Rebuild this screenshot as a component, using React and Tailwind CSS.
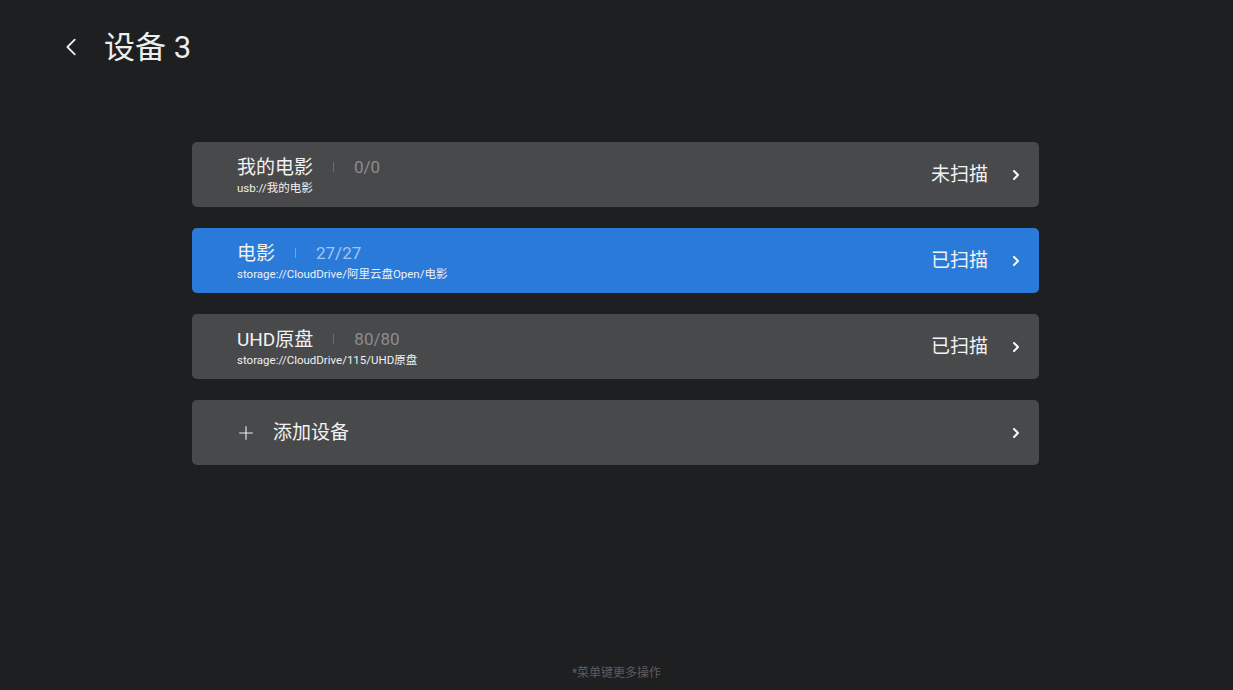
import React from 'react';

const font = { fontFamily: 'Roboto, "Noto Sans CJK SC", sans-serif' };

const devices = [
    { name: '我的电影', count: '0/0', path: 'usb://我的电影', status: '未扫描', active: false },
    { name: '电影', count: '27/27', path: 'storage://CloudDrive/阿里云盘Open/电影', status: '已扫描', active: true },
    { name: 'UHD原盘', count: '80/80', path: 'storage://CloudDrive/115/UHD原盘', status: '已扫描', active: false },
];

const Chevron = ({ className }) => (
    <svg viewBox="0 0 24 24" className={className} fill="none" stroke="currentColor" strokeWidth="3" strokeLinecap="round" strokeLinejoin="round">
        <path d="M9 6l6 6-6 6" />
    </svg>
);

const DeviceRow = ({ device }) => (
    <div
        className={`flex items-center h-[65px] rounded-[5px] pl-[45px] pr-[15px] ${device.active ? 'bg-[#2a7ad9]' : 'bg-[#48494b]'}`}
    >
        <div className="flex-1 flex flex-col">
            <div className="flex items-center h-[26px]">
                <span className="text-[19px] text-[#f2f2f2] leading-none">{device.name}</span>
                <span className={`ml-[20px] mr-[20px] w-px h-[10px] ${device.active ? 'bg-[#6fa3e6]' : 'bg-[#6a6b6d]'}`} />
                <span className={`text-[17px] leading-none ${device.active ? 'text-[#a3c5f0]' : 'text-[#8c8d8f]'}`}>{device.count}</span>
            </div>
            <div className="text-[11.5px] text-[#f0f0f0] leading-none mt-[3px]">{device.path}</div>
        </div>
        <span className="text-[19px] text-[#f2f2f2] leading-none">{device.status}</span>
        <Chevron className="w-[16px] h-[16px] text-white ml-[20px]" />
    </div>
);

export default function App() {
    return (
        <div style={font} className="w-[1233px] h-[690px] bg-[#1e1f21] relative flex flex-col">
            {/* Header */}
            <div className="flex items-center pt-[29px] pl-[61px] h-[65px]">
                <svg viewBox="0 0 24 24" className="w-[22px] h-[22px] text-[#eeeeee]" fill="none" stroke="currentColor" strokeWidth="2" strokeLinecap="round" strokeLinejoin="round">
                    <path d="M15 4l-8 8 8 8" />
                </svg>
                <h1 className="ml-[21px] text-[31px] text-[#eeeeee] leading-none">设备 3</h1>
            </div>

            {/* Device list */}
            <div className="ml-[192px] w-[847px] mt-[77px] flex flex-col gap-[21px]">
                {devices.map((d) => (
                    <DeviceRow key={d.name} device={d} />
                ))}
                <div className="flex items-center h-[65px] rounded-[5px] bg-[#48494b] pl-[45px] pr-[15px]">
                    <svg viewBox="0 0 24 24" className="w-[18px] h-[18px] text-[#eeeeee]" fill="none" stroke="currentColor" strokeWidth="1.5">
                        <path d="M12 3v18M3 12h18" />
                    </svg>
                    <span className="ml-[18px] flex-1 text-[19px] text-[#f2f2f2] leading-none">添加设备</span>
                    <Chevron className="w-[16px] h-[16px] text-white" />
                </div>
            </div>

            {/* Footer hint */}
            <div className="absolute bottom-[8px] left-0 right-0 text-center text-[12px] text-[#5c5d5f]">*菜单键更多操作</div>
        </div>
    );
}
